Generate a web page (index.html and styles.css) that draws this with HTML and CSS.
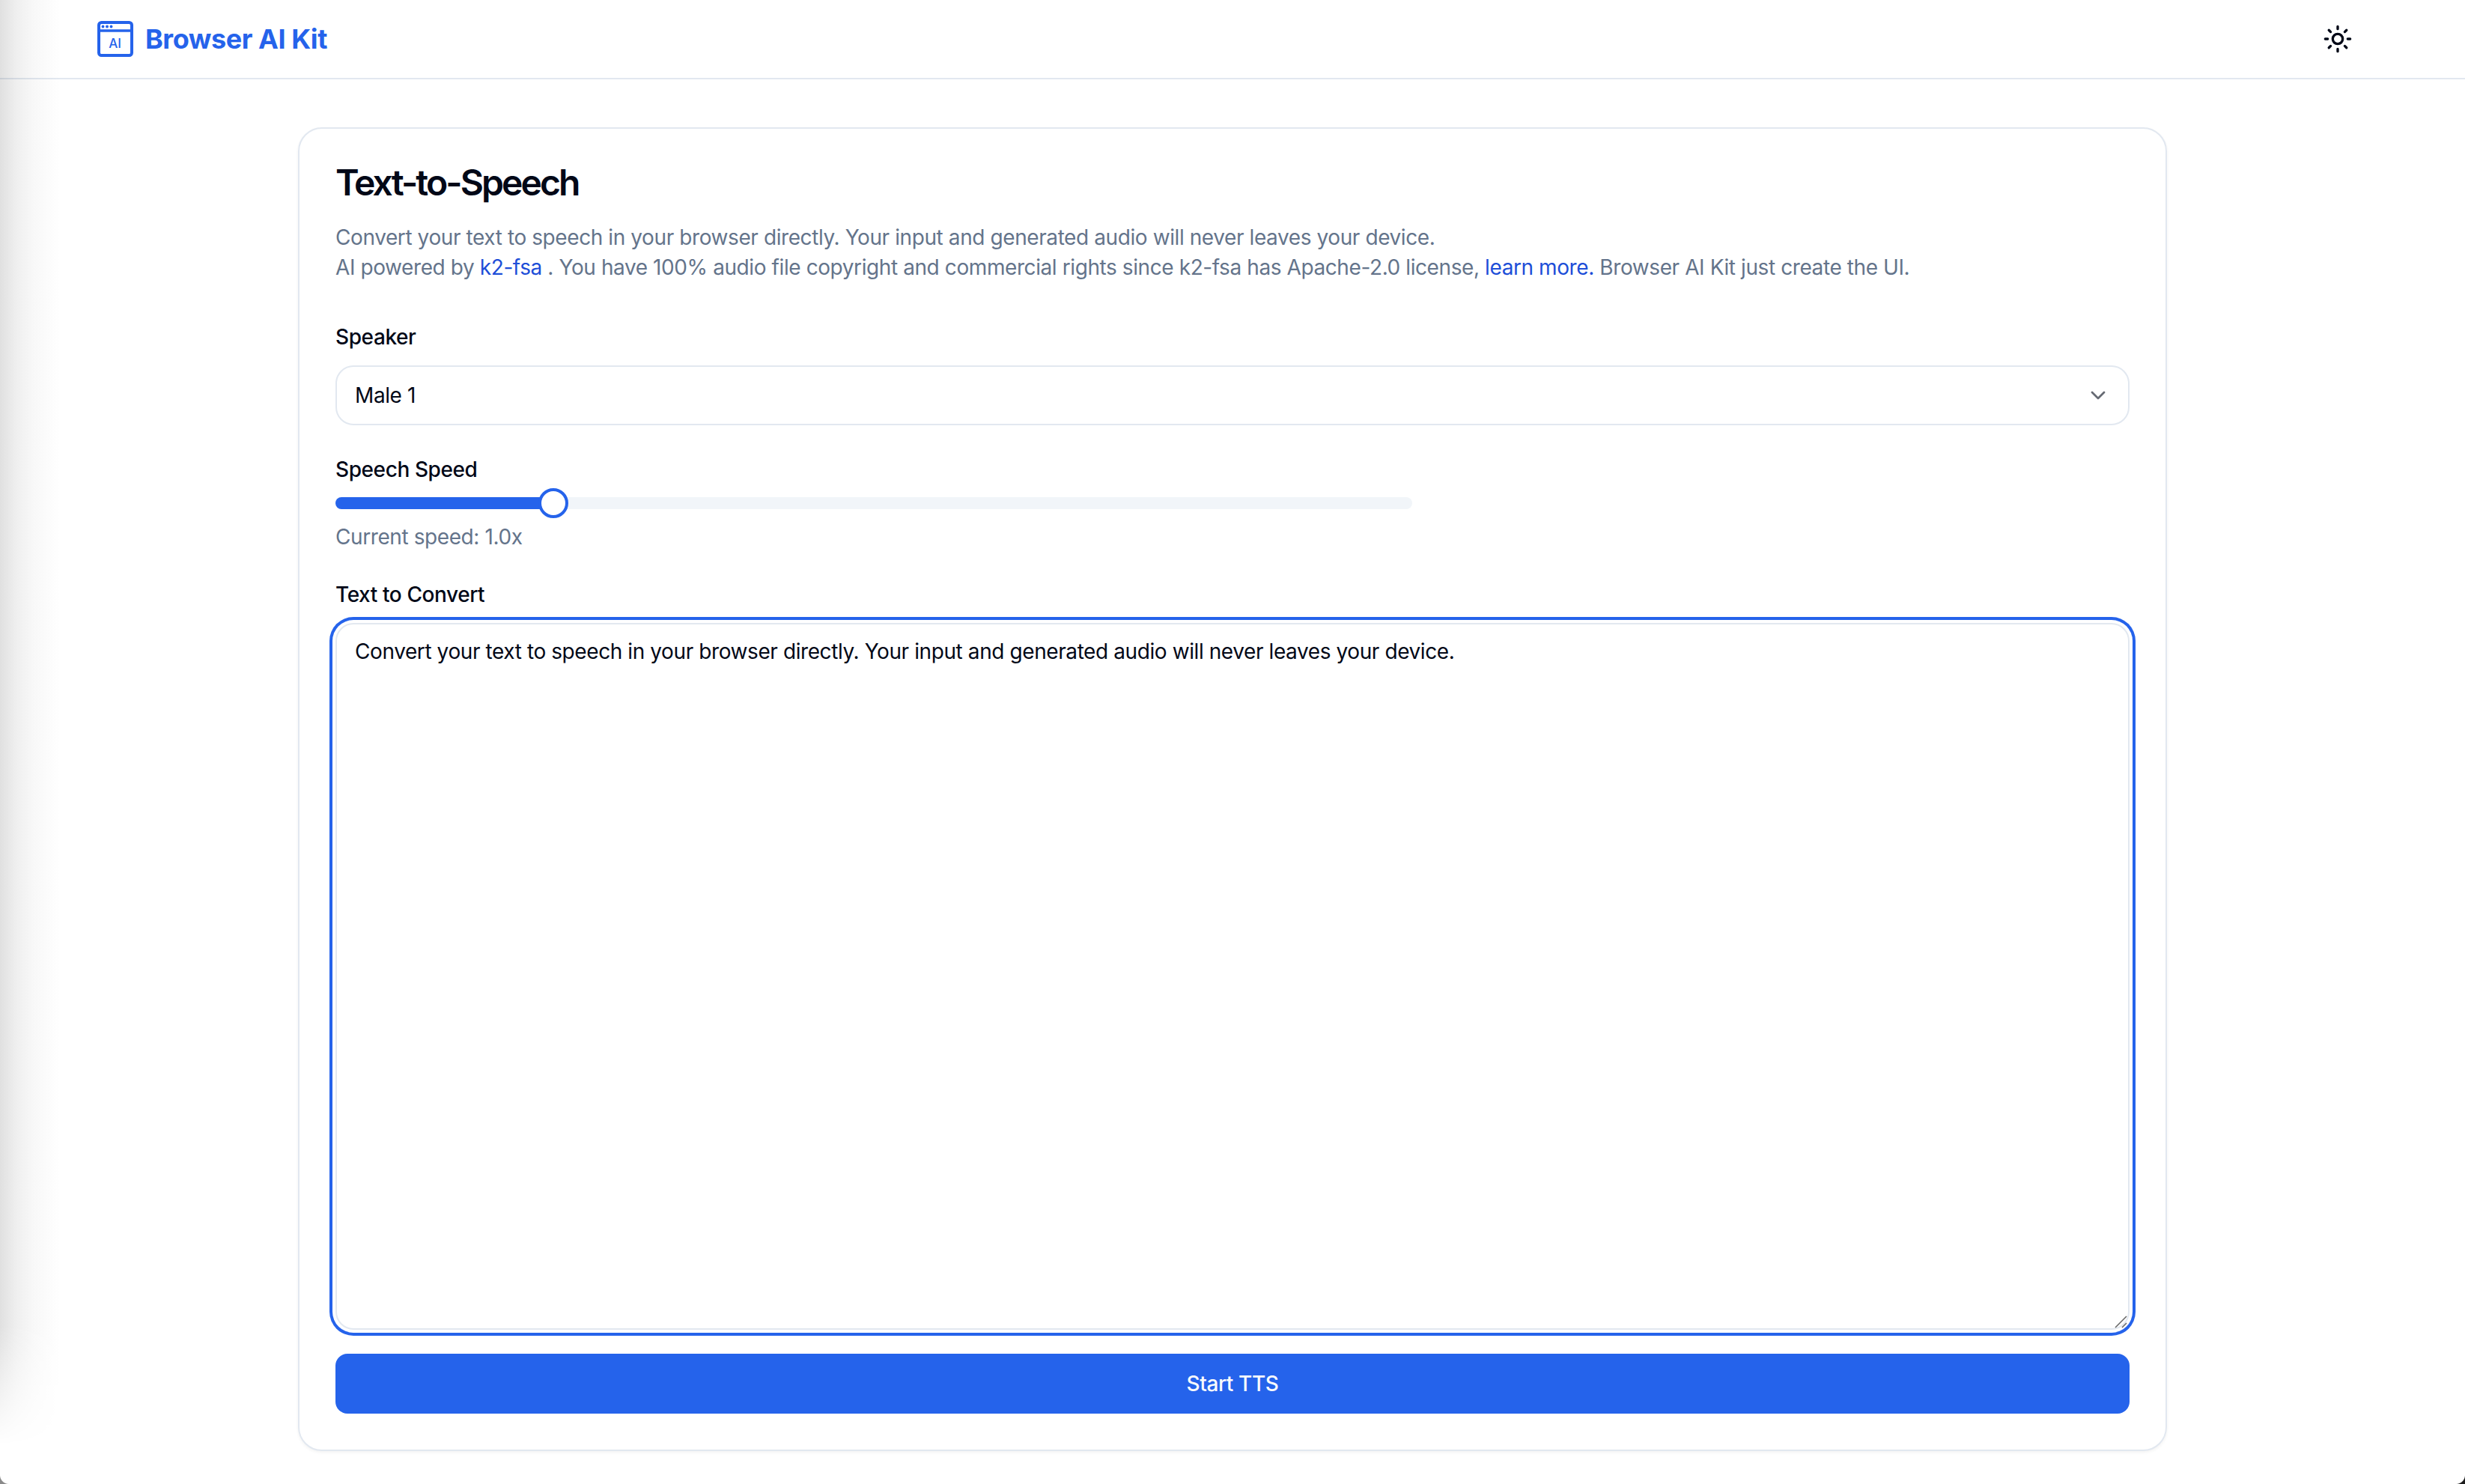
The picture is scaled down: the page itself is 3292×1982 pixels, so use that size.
FILE: index.html
```html
<!DOCTYPE html>
<html lang="en">
<head>
<meta charset="utf-8">
<title>Browser AI Kit</title>
<link rel="stylesheet" href="styles.css">
</head>
<body>
<header class="site-header">
  <a class="brand" href="#">
    <svg class="brand-icon" viewBox="0 0 48 48" aria-hidden="true">
      <rect x="2" y="2" width="44" height="44" rx="3.5" fill="none" stroke="#2563eb" stroke-width="4"/>
      <path d="M2 13h44" stroke="#2563eb" stroke-width="3.6"/>
      <circle cx="7.5" cy="7.5" r="1.9" fill="#2563eb"/>
      <circle cx="13" cy="7.5" r="1.9" fill="#2563eb"/>
      <circle cx="18.5" cy="7.5" r="1.9" fill="#2563eb"/>
      <text class="brand-icon-text" x="23.5" y="35.5" text-anchor="middle">AI</text>
    </svg>
    <span class="brand-name">Browser AI Kit</span>
  </a>
  <button class="theme-toggle" type="button" aria-label="Toggle theme">
    <svg class="sun" viewBox="0 0 24 24" fill="none" stroke="#020817" stroke-width="2" stroke-linecap="round" stroke-linejoin="round" aria-hidden="true">
      <circle cx="12" cy="12" r="4"/>
      <path d="M12 2v2M12 20v2M4.93 4.93l1.41 1.41M17.66 17.66l1.41 1.41M2 12h2M20 12h2M6.34 17.66l-1.41 1.41M19.07 4.93l-1.41 1.41"/>
    </svg>
  </button>
</header>

<main class="page">
  <section class="card">
    <h1 class="title">Text-to-Speech</h1>
    <p class="desc">Convert your text to speech in your browser directly. Your input and generated audio will never leaves your device.<br>AI powered by <a class="link" href="#">k2-fsa</a> . You have 100% audio file copyright and commercial rights since k2-fsa has Apache-2.0 license, <a class="link" href="#">learn more.</a> Browser AI Kit just create the UI.</p>

    <label class="label label-speaker">Speaker</label>
    <button class="select" type="button">
      <span>Male 1</span>
      <svg class="chevron" viewBox="0 0 24 24" fill="none" stroke="#020817" stroke-width="2" stroke-linecap="round" stroke-linejoin="round" aria-hidden="true"><path d="m6 9 6 6 6-6"/></svg>
    </button>

    <label class="label label-speed">Speech Speed</label>
    <div class="slider">
      <div class="slider-fill"></div>
      <div class="slider-thumb"></div>
    </div>
    <p class="hint">Current speed: 1.0x</p>

    <label class="label label-text">Text to Convert</label>
    <div class="textarea-wrap">
      <textarea class="textarea" spellcheck="false">Convert your text to speech in your browser directly. Your input and generated audio will never leaves your device.</textarea>
      <svg class="grip" viewBox="0 0 20 20" fill="none" stroke="#666" stroke-width="1.5" aria-hidden="true"><path d="M3 19 18 4M12 19l6-6"/></svg>
    </div>

    <button class="submit" type="button">Start TTS</button>
  </section>
</main>

<div class="edge-shadow"></div>
<div class="window-corners"></div>
</body>
</html>
```

FILE: styles.css
```css
* { box-sizing: border-box; }

html, body {
  margin: 0;
  height: 100%;
  overflow: hidden;
  background: #fff;
}

body {
  font-family: Inter, "Liberation Sans", sans-serif;
  font-size: 28px;
  letter-spacing: -0.41px;
  color: #020817;
}

.site-header {
  height: 106px;
  border-bottom: 2px solid #e2e8f0;
  display: flex;
  align-items: center;
  justify-content: space-between;
  padding: 0 150px 0 130px;
}

.brand {
  display: flex;
  align-items: center;
  gap: 16px;
  text-decoration: none;
}

.brand-icon { width: 48px; height: 48px; display: block; }

.brand-icon-text {
  font-family: Inter, sans-serif;
  font-size: 17px;
  font-weight: 500;
  letter-spacing: 0;
  fill: #2563eb;
}

.brand-name {
  font-size: 36px;
  font-weight: 700;
  line-height: 40px;
  letter-spacing: -0.45px;
  color: #2563eb;
}

.theme-toggle {
  padding: 0;
  border: 0;
  background: none;
  display: block;
}

.sun { width: 40px; height: 40px; display: block; }

.page { padding-top: 64px; }

.card {
  width: 2496px;
  margin: 0 auto;
  padding: 48px;
  border: 2px solid #e2e8f0;
  border-radius: 32px;
  background: #fff;
  box-shadow: 0 2px 4px rgba(0, 0, 0, .05);
  display: flex;
  flex-direction: column;
}

.title {
  margin: 0;
  font-size: 48px;
  line-height: 48px;
  font-weight: 600;
  letter-spacing: -2.9px;
}

.desc {
  margin: 29px 0 0;
  line-height: 40px;
  color: #64748b;
}

.link { color: #1d4ed8; text-decoration: none; }

.label {
  display: block;
  font-weight: 500;
  line-height: 40px;
}

.label-speaker { margin-top: 53px; margin-bottom: 18px; }
.label-speed { margin-top: 39px; }
.label-text { margin-top: 37px; margin-bottom: 18px; }

.select {
  height: 80px;
  padding: 0 24px;
  border: 2px solid #e2e8f0;
  border-radius: 24px;
  background: #fff;
  color: #020817;
  font: inherit;
  letter-spacing: inherit;
  display: flex;
  align-items: center;
  justify-content: space-between;
}

.chevron { width: 32px; height: 32px; opacity: .6; }

.slider {
  position: relative;
  width: 1438px;
  height: 16px;
  margin-top: 17px;
  margin-bottom: 17px;
  border-radius: 8px;
  background: #f1f5f9;
}

.slider-fill {
  width: 291px;
  height: 100%;
  border-radius: 8px 0 0 8px;
  background: #2563eb;
}

.slider-thumb {
  position: absolute;
  left: 271px;
  top: -12px;
  width: 40px;
  height: 40px;
  border: 4px solid #2563eb;
  border-radius: 50%;
  background: #fff;
}

.hint {
  margin: 0;
  line-height: 40px;
  color: #64748b;
}

.textarea-wrap { position: relative; }

.textarea {
  display: block;
  width: 100%;
  height: 944px;
  padding: 16px 24px;
  border: 2px solid #e2e8f0;
  border-radius: 24px;
  background: #fff;
  color: #020817;
  font: inherit;
  letter-spacing: inherit;
  line-height: 40px;
  outline: none;
  box-shadow: 0 0 0 4px #fff, 0 0 0 8px #2563eb;
  resize: none;
}

.grip {
  position: absolute;
  right: 2px;
  bottom: 2px;
  width: 20px;
  height: 20px;
}

.submit {
  height: 80px;
  margin-top: 32px;
  border: 0;
  border-radius: 16px;
  background: #2563eb;
  color: #f8fafc;
  font: inherit;
  letter-spacing: inherit;
  font-weight: 500;
}

.edge-shadow {
  position: fixed;
  left: 0;
  top: 0;
  bottom: 0;
  width: 80px;
  background: linear-gradient(to right, #e0e0e0 0, #efefef 22px, #f8f8f8 45px, #fff 80px);
  -webkit-mask-image: linear-gradient(to bottom, #000 0, #000 1770px, transparent 1930px);
  mask-image: linear-gradient(to bottom, #000 0, #000 1770px, transparent 1930px);
  mix-blend-mode: multiply;
  pointer-events: none;
}

.window-corners {
  position: fixed;
  inset: 0;
  overflow: hidden;
  pointer-events: none;
}

.window-corners::before,
.window-corners::after {
  content: "";
  position: absolute;
  bottom: 0;
  width: 12px;
  height: 12px;
}

.window-corners::before {
  left: 0;
  background: radial-gradient(circle at 100% 0, transparent 11.5px, #8a8a8a 12.5px);
}

.window-corners::after {
  right: 0;
  background: radial-gradient(circle at 0 0, transparent 11.5px, #1c1c1c 12.5px);
}
```
